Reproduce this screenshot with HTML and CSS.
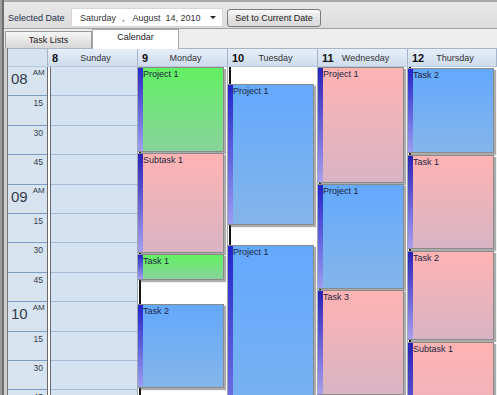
FILE: index.html
```html
<!DOCTYPE html>
<html lang="en">
<head>
	<meta charset="UTF-8">
	<title>Scheduler</title>
	<link rel="stylesheet" href="styles.css">
</head>
<body>
	<div class="window">
		<div class="toolbar">
			<span class="label">Selected Date</span>
			<div class="datepicker">
				<span class="dp-day">Saturday</span>
				<span class="dp-comma">,</span>
				<span class="dp-month">August</span>
				<span class="dp-date">14, 2010</span>
				<span class="dp-arrow"></span>
			</div>
			<button class="btn">Set to Current Date</button>
		</div>

		<div class="tabs">
			<div class="tab">Task Lists</div>
			<div class="tab active">Calendar</div>
		</div>

		<div class="scheduler">
			<div class="sched">
				<div class="sched-head">
					<div class="head-blank"></div>
					<div class="head-cell"><b>8</b><span>Sunday</span></div>
					<div class="head-cell"><b>9</b><span>Monday</span></div>
					<div class="head-cell"><b>10</b><span>Tuesday</span></div>
					<div class="head-cell"><b>11</b><span>Wednesday</span></div>
					<div class="head-cell"><b>12</b><span>Thursday</span></div>
				</div>

				<div class="sched-body">
					<div class="times">
						<div class="slot hour"><span class="hh">08</span><span class="ampm">AM</span></div>
						<div class="slot"><span class="mm">15</span></div>
						<div class="slot"><span class="mm">30</span></div>
						<div class="slot"><span class="mm">45</span></div>
						<div class="slot hour"><span class="hh">09</span><span class="ampm">AM</span></div>
						<div class="slot"><span class="mm">15</span></div>
						<div class="slot"><span class="mm">30</span></div>
						<div class="slot"><span class="mm">45</span></div>
						<div class="slot hour"><span class="hh">10</span><span class="ampm">AM</span></div>
						<div class="slot"><span class="mm">15</span></div>
						<div class="slot"><span class="mm">30</span></div>
						<div class="slot"><span class="mm">45</span></div>
					</div>

					<div class="sep"></div>

					<!-- sunday: nothing planned -->
					<div class="day free">
						<div class="slot"></div><div class="slot"></div><div class="slot"></div><div class="slot"></div>
						<div class="slot"></div><div class="slot"></div><div class="slot"></div><div class="slot"></div>
						<div class="slot"></div><div class="slot"></div><div class="slot"></div><div class="slot"></div>
					</div>

					<div class="day busy">
						<div class="event green" style="top:0;height:85px">Project 1</div>
						<div class="event pink" style="top:86px;height:100px">Subtask 1</div>
						<div class="event green" style="top:187px;height:26px">Task 1</div>
						<div class="event blue" style="top:237px;height:84px">Task 2</div>
					</div>

					<div class="day busy">
						<div class="event blue" style="top:17px;height:141px">Project 1</div>
						<div class="event blue" style="top:178px;height:250px">Project 1</div>
					</div>

					<div class="day busy">
						<div class="event pink" style="top:0;height:116px">Project 1</div>
						<div class="event blue" style="top:117px;height:105px">Project 1</div>
						<div class="event pink" style="top:223px;height:105px">Task 3</div>
					</div>

					<div class="day busy">
						<div class="event blue" style="top:1px;height:85px">Task 2</div>
						<div class="event pink" style="top:88px;height:94px">Task 1</div>
						<div class="event pink" style="top:184px;height:89px">Task 2</div>
						<div class="event pink" style="top:275px;height:150px">Subtask 1</div>
					</div>
				</div>
			</div>
		</div>
	</div>
</body>
</html>
```

FILE: styles.css
```css
html,
body {
	margin: 0;
	padding: 0;
	height: 100%;
	overflow: hidden;
}
body {
	font-family: "Liberation Sans", Arial, sans-serif;
	font-size: 9px;
	color: #222;
	border-left: 2px solid #9d9d9d;
	background: #d0d0d0;
}
.window {
	height: 100%;
	border-left: 2px solid #6e6e6e;
}

/* toolbar */
.toolbar {
	display: flex;
	align-items: center;
	height: 19px;
	padding: 6px 0 1px 4px;
	border-top: 2px solid #a9a9a9;
	border-bottom: 1px solid #a2a2a2;
	background: linear-gradient(#e8e8e8, #dcdcdc);
}
.label {
	color: #1f2f4c;
	width: 63px;
	white-space: nowrap;
}
.datepicker {
	display: flex;
	align-items: center;
	box-sizing: border-box;
	width: 152px;
	height: 19px;
	padding-left: 8px;
	white-space: nowrap;
	background: #fff;
	border: 1px solid #d6d6d6;
	color: #333;
}
.dp-comma {
	margin-left: 6px;
}
.dp-month {
	margin-left: 8px;
}
.dp-date {
	margin-left: 5px;
}
.dp-arrow {
	margin-left: 9px;
	width: 0;
	height: 0;
	border-left: 3px solid transparent;
	border-right: 3px solid transparent;
	border-top: 3px solid #222;
}
.btn {
	margin-left: 4px;
	width: 94px;
	height: 18px;
	padding: 0;
	font-family: inherit;
	font-size: 9px;
	color: #222;
	white-space: nowrap;
	border: 1px solid #7b7b7b;
	border-radius: 3px;
	background: linear-gradient(#fbfbfb, #e4e4e4 50%, #d9d9d9);
}

/* tabs */
.tabs {
	display: flex;
	align-items: flex-end;
	height: 19px;
	padding-left: 1px;
	background: #eeeeee;
}
.tab {
	box-sizing: border-box;
	width: 87px;
	height: 17px;
	line-height: 16px;
	text-align: center;
	border: 1px solid #9a9a9a;
	border-bottom: none;
	background: linear-gradient(#f6f6f6, #d6d6d6);
}
.tab.active {
	width: 87px;
	height: 20px;
	line-height: 14px;
	margin-bottom: -1px;
	border-color: #a8a8a8;
	background: #fff;
	position: relative;
}

/* scheduler frame */
.scheduler {
	padding-left: 3px;
	background: #cdcdcd;
}
.sched {
	border-left: 1px solid #787878;
	background: #fff;
}
.sched-head {
	display: grid;
	grid-template-columns: 40px 90px 90px 90px 90px 1fr;
	height: 17px;
	border-top: 1px solid #a8b4c4;
	border-bottom: 1px solid #b8c8dc;
}
.head-blank {
	border-right: 1px solid #a4b4ca;
	background: #d6e2f0;
}
.head-cell {
	display: grid;
	align-items: center;
	border-right: 1px solid #a4b4ca;
	background: linear-gradient(#e6eef8, #cedcee);
}
.head-cell b,
.head-cell span {
	grid-area: 1 / 1;
}
.head-cell b {
	justify-self: start;
	padding-left: 4px;
	font-size: 11px;
	color: #111;
}
.head-cell span {
	justify-self: center;
	padding-left: 6px;
	color: #333;
}

/* body */
.sched-body {
	display: grid;
	grid-template-columns: 39px 4px 86px 90px 90px 90px 1fr;
	height: 329px;
	overflow: hidden;
}
.slot {
	box-sizing: border-box;
	height: 29.4px;
	border-bottom: 1px solid #a6bcd6;
}
.times {
	background: #d8e3f0;
}
.times .slot {
	display: flex;
	justify-content: flex-end;
	border-bottom-color: #7f9cc2;
	color: #333c4c;
}
.times .hour {
	justify-content: flex-start;
	padding-left: 3px;
}
.hh {
	margin-top: 4px;
	font-size: 15px;
	line-height: 15px;
}
.ampm {
	margin: 2px 0 0 5px;
	font-size: 8px;
	line-height: 8px;
}
.mm {
	margin: 2px 4px 0 0;
	font-size: 8.5px;
	line-height: 10px;
}
.sep {
	box-sizing: border-box;
	border-left: 1px solid #6a6a6a;
	border-right: 1px solid #6a6a6a;
	background: #fff;
}
.day {
	position: relative;
}
.day.free {
	background: #d5e2f1;
}
.day.busy {
	border-left: 1px solid #a0a8b4;
	background: linear-gradient(to right, #fff 1px, #151515 1px, #151515 3px, #fff 3px);
}

/* events */
.event {
	position: absolute;
	left: 0;
	box-sizing: border-box;
	width: 86px;
	padding-left: 5px;
	line-height: 12px;
	color: #1c2540;
	border: 1px solid #8a8a8a;
	border-left: none;
	box-shadow: 2px 2px 1px rgba(70, 70, 70, .45);
}
.event.green {
	background: linear-gradient(#2828c8, #a0a0f0) left / 5px 100% no-repeat,
		linear-gradient(#62f062, #88d49c);
}
.event.pink {
	background: linear-gradient(#2a22b8, #a8a0ee) left / 5px 100% no-repeat,
		linear-gradient(#ffb3b3, #d8b4c4);
}
.event.blue {
	background: linear-gradient(#2424cc, #9c9cf0) left / 5px 100% no-repeat,
		linear-gradient(#63a9fd, #84b5ea);
}
```
